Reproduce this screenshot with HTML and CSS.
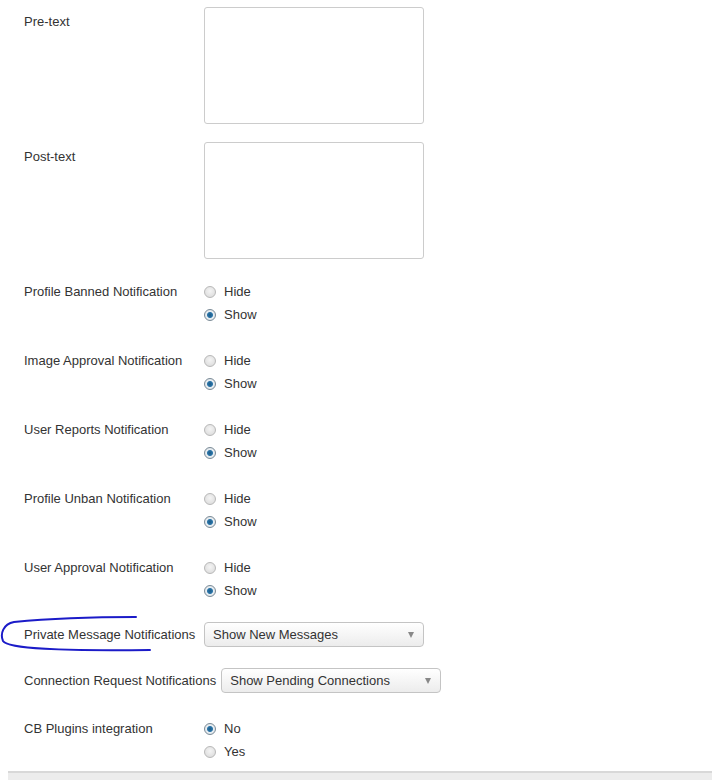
FILE: index.html
```html
<!DOCTYPE html>
<html lang="en">
<head>
    <meta charset="UTF-8">
    <title>Notification Settings</title>
    <link rel="stylesheet" href="styles.css">
</head>
<body>
    <div class="settings">
        <div class="row">
            <label class="label">Pre-text</label>
            <textarea class="area"></textarea>
        </div>
        <div class="row">
            <label class="label">Post-text</label>
            <textarea class="area"></textarea>
        </div>

        <div class="row">
            <label class="label">Profile Banned Notification</label>
            <div class="radios">
                <label class="opt"><input type="radio" name="ban"> Hide</label>
                <label class="opt"><input type="radio" name="ban" checked> Show</label>
            </div>
        </div>
        <div class="row">
            <label class="label">Image Approval Notification</label>
            <div class="radios">
                <label class="opt"><input type="radio" name="img"> Hide</label>
                <label class="opt"><input type="radio" name="img" checked> Show</label>
            </div>
        </div>
        <div class="row">
            <label class="label">User Reports Notification</label>
            <div class="radios">
                <label class="opt"><input type="radio" name="rep"> Hide</label>
                <label class="opt"><input type="radio" name="rep" checked> Show</label>
            </div>
        </div>
        <div class="row">
            <label class="label">Profile Unban Notification</label>
            <div class="radios">
                <label class="opt"><input type="radio" name="unban"> Hide</label>
                <label class="opt"><input type="radio" name="unban" checked> Show</label>
            </div>
        </div>
        <div class="row">
            <label class="label">User Approval Notification</label>
            <div class="radios">
                <label class="opt"><input type="radio" name="appr"> Hide</label>
                <label class="opt"><input type="radio" name="appr" checked> Show</label>
            </div>
        </div>

        <div class="row row-select">
            <svg class="scribble" width="160" height="44" viewBox="0 0 160 44">
                <path d="M136 3 C 100 3, 45 5, 14 8 C 3 10, 0 20, 3 27 C 8 35, 60 37, 150 36" fill="none" stroke="#1b1bc8" stroke-width="2" stroke-linecap="round"/>
            </svg>
            <label class="label">Private Message Notifications</label>
            <div class="select">Show New Messages<span class="caret"></span></div>
        </div>
        <div class="row row-select">
            <label class="label">Connection Request Notifications</label>
            <div class="select">Show Pending Connections<span class="caret"></span></div>
        </div>

        <div class="row row-last">
            <label class="label">CB Plugins integration</label>
            <div class="radios">
                <label class="opt"><input type="radio" name="cb" checked> No</label>
                <label class="opt"><input type="radio" name="cb"> Yes</label>
            </div>
        </div>
    </div>
    <div class="footer-bar"></div>
</body>
</html>
```

FILE: styles.css
```css
body {
    margin: 0;
    background: #fff;
    font-family: "Liberation Sans", Arial, sans-serif;
    font-size: 13px;
    color: #333;
}

.settings {
    padding: 7px 0 0 24px;
}

.row {
    display: flex;
    align-items: flex-start;
    margin-bottom: 18px;
    position: relative;
}

.label {
    min-width: 175px;
    margin-right: 5px;
    padding-top: 3px;
    line-height: 23px;
    white-space: nowrap;
}

.area {
    width: 220px;
    height: 117px;
    box-sizing: border-box;
    border: 1px solid #ccc;
    border-radius: 3px;
    margin: 0;
    resize: none;
    background: #fff;
}

.radios {
    display: flex;
    flex-direction: column;
    padding: 3px 0 2px;
}

.opt {
    display: flex;
    align-items: center;
    height: 23px;
    color: #333;
}

.opt input {
    appearance: none;
    -webkit-appearance: none;
    width: 12px;
    height: 12px;
    margin: 0 8px 0 0;
    border: 1px solid #b8b8b8;
    border-radius: 50%;
    box-sizing: border-box;
    background: radial-gradient(circle at 50% 40%, #f4f4f4 0, #d8d8d8 100%);
}

.opt input:checked {
    border-color: #7a8a96;
    background: radial-gradient(circle, #1d5b86 0, #2a74a8 2.5px, #e8eef2 3.5px, #d8dde2 100%);
}

.row-select {
    align-items: center;
    margin-bottom: 21px;
}

.row-select .label {
    padding-top: 0;
}

.row-last {
    margin-bottom: 6px;
}

.select {
    position: relative;
    width: 220px;
    height: 25px;
    box-sizing: border-box;
    padding: 0 20px 0 8px;
    line-height: 23px;
    border: 1px solid #c4c4c4;
    border-radius: 4px;
    background: linear-gradient(#fff, #ececec);
    color: #333;
}

.caret {
    position: absolute;
    right: 9px;
    top: 9px;
    border-left: 3.5px solid transparent;
    border-right: 3.5px solid transparent;
    border-top: 6px solid #888;
}

.scribble {
    position: absolute;
    left: -24px;
    top: -8px;
}

.footer-bar {
    margin-left: 8px;
    height: 12px;
    border-top: 2px solid #d8d8d8;
    background: #ececec;
}
```
